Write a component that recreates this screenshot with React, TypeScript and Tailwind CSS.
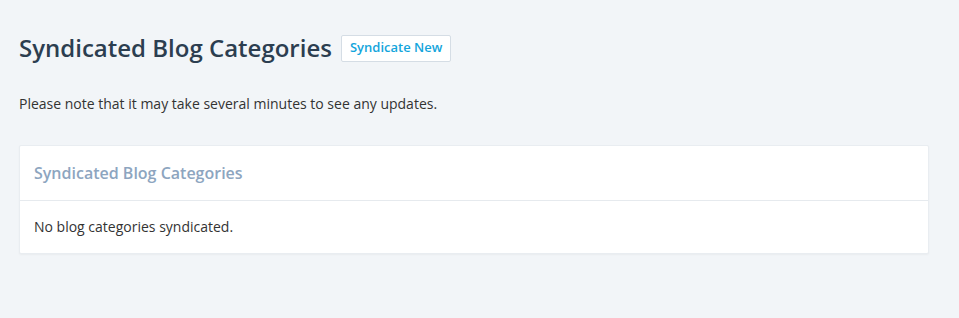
export default function App() {
  return (
    <div
      className="min-h-[318px] bg-[#f2f5f8] px-[19px] pt-[30px] pb-10"
      style={{ fontFamily: '"Open Sans", sans-serif' }}
    >
      <div className="flex items-center gap-[9px]">
        <h1 className="text-[24px] font-semibold leading-[36px] text-[#2c3e50]">
          Syndicated Blog Categories
        </h1>
        <button className="h-[27px] rounded-[2px] border border-[#d5dde5] bg-white px-[8px] text-[13px] font-semibold text-[#13a5dc]">
          Syndicate New
        </button>
      </div>

      <p className="mt-[28px] text-[14px] leading-[20px] text-[#333]">
        Please note that it may take several minutes to see any updates.
      </p>

      <div className="mt-[31px] w-[910px] rounded-[2px] border border-[#e9edf1] bg-white shadow-[0_1px_2px_rgba(0,0,0,0.04)]">
        <div className="border-b border-[#e6eaee] px-[14px] pt-[14px] pb-[13px]">
          <h2 className="text-[16px] font-semibold leading-[27px] text-[#8da5bf]">
            Syndicated Blog Categories
          </h2>
        </div>
        <div className="px-[14px] pt-[16px] pb-[16px]">
          <p className="text-[14px] leading-[20px] text-[#333]">
            No blog categories syndicated.
          </p>
        </div>
      </div>
    </div>
  );
}
